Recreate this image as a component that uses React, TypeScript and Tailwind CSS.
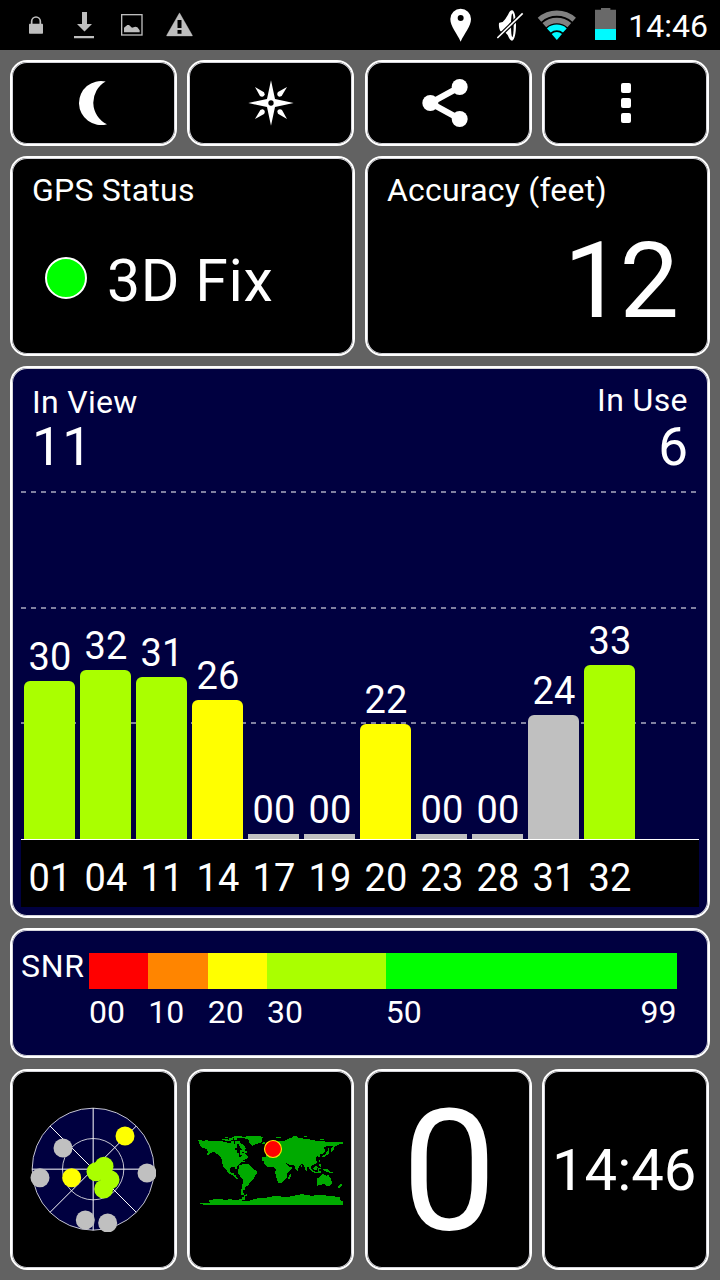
import React from 'react';

type Satellite = {
  id: string;
  snr: string;
  height: number;
  color: string;
};

type RadarDot = {
  x: number;
  y: number;
  fill: string;
};

const GRAY = '#c0c0c0';
const YELLOW = '#ffff00';
const LIME = '#aaff00';

const satellites: Satellite[] = [
  { id: '01', snr: '30', height: 158, color: LIME },
  { id: '04', snr: '32', height: 169, color: LIME },
  { id: '11', snr: '31', height: 162, color: LIME },
  { id: '14', snr: '26', height: 139, color: YELLOW },
  { id: '17', snr: '00', height: 5, color: GRAY },
  { id: '19', snr: '00', height: 5, color: GRAY },
  { id: '20', snr: '22', height: 115, color: YELLOW },
  { id: '23', snr: '00', height: 5, color: GRAY },
  { id: '28', snr: '00', height: 5, color: GRAY },
  { id: '31', snr: '24', height: 124, color: GRAY },
  { id: '32', snr: '33', height: 174, color: LIME },
];

const radarDots: RadarDot[] = [
  { x: 376, y: 229, fill: YELLOW },
  { x: 190, y: 265, fill: GRAY },
  { x: 121, y: 354, fill: GRAY },
  { x: 442, y: 340, fill: GRAY },
  { x: 216, y: 354, fill: YELLOW },
  { x: 257, y: 481, fill: GRAY },
  { x: 324, y: 490, fill: GRAY },
  { x: 313, y: 320, fill: LIME },
  { x: 289, y: 336, fill: LIME },
  { x: 331, y: 360, fill: LIME },
  { x: 312, y: 388, fill: LIME },
];

const continents = [
  // north america
  'M24 60h12v3h9v-3h9v3h45v3h12v3h12v-6h9v9h9v12h-6v6h6v9h9v-9h9v6h-3v9h-6v-6h-3v12l9-3v-9h6l12 9v6l-12 6-12 9-9 9v9h-6v-6h-12l-3 9 3 9h9v6h6v6l9 6h-9l-12-12-9-3-6-9-6-9-6-3-3-18-3-12-12-9-9-6-12 3-6 6-6-3 6-6-3-9-12-3-6-3z',
  'M96 57h18v3h9v3h-18v-3h-9zM117 54h12v6h-12zM105 51h9v3h-9zM132 48h24v6h-15v6h-9zM135 63h15v6l12 6 6 12-9 3-9-6-3-12h-12zM126 51h6v3h-6z',
  'M159 90h6v3h6v6h-9zM138 117h12v3h6v6h-6v-3h-12zM156 123h9v3h-9z',
  // greenland and iceland
  'M153 51h15v-3h45v3h6v3h-3v9l-6 6-12 3-6 3-6 3-6-6-3-9-6-6-12-3h-6zM219 66h6v6h-9v-3h3z',
  // south america
  'M147 135h9v-3h18l9 9 6 6 12 6v6l-6 6-3 12-9 6-6 9-6 6-6 3v9h-6v9l3 3v3h-9v-12l3-9 3-24-9-12-6-9v-12h3z',
  // europe and asia
  'M240 63h9v-3h9v3h27v-3l12-3v-3h12v-3h15v3h15v3h21v3h15v3h30v3h54v6h-12v3l-12 3-3 9-9 9v-9l6-9h-15l-12 3v6h3v6l-9 9h-6v9h-3l-6-3-3 9 3 9-6 6-9 3-3 9-6 3v-6h-6v12h-3l-6-18-9-3-6 6-3 15-6-3-6-15h-9l-12-3-6-6v9l12 6-9 9-9 3-6-15-6-12h6v-6h-15l-6 3-6-6-3 6-6-6-6-3-3 9h-12v-12h12v-6l9-6-6-12z',
  'M226 84h6v-6h5v12h-11zM258 51h15v3h-15zM306 51l6-3h9v3h-12l-6 6v-3zM342 48h9v3h-9zM390 57h12v3h-12z',
  // africa
  'M228 111h24v3h12v3h18l9 18 6 6h9v3l-15 15v12l-9 9-3 6-9 3h-6l-9-33 3-6-9-9h-18l-9-9v-9zM297 165l3-3 3 3-3 12h-6z',
  // japan and islands
  'M411 93h6v6l-6 6-9 6h-6v-3l12-6zM414 84h3v9h-3zM387 120h3v6h-3zM387 132h6v9h-3l-3-6zM357 138l12 15h6v3h-9l-9-12zM369 144l9-6 6 3-3 9h-9zM384 144h9v3h-6v9h-3zM372 156h21v3h-21zM399 147h12l12 9h6v3h-9l-9-3-12-6zM333 135h4v5h-4zM387 153h6v3h-6z',
  // australia and new zealand
  'M381 174l9-3 6-9 9 3 6 3 3-6 3 6 6 9 3 12-9 9h-9l-6-6-15 3-6 3v-12zM414 192h6v3h-6zM450 192h6v5l-9 7h-3v-3z',
  // antarctica
  'M24 249h36v-3h-3v-6h12v-3h30v3h15v-3h12v3h21v-3h9v-6h6v-6h6v-3h3v6h-6v12h-9v3h24v-3l15-3 12-3h24v-3l30-3h12v3h27v-3h15v-3h15v-3h12v3h18v3h12v-3h36v3h27v3h15v9l3 3h12v6h15v6h-435z',
].join('');

const cardEdge = 'rounded-[17px] border-2 border-white shadow-[inset_0_0_0_1px_#d4d4da]';

const Card: React.FC<{ className?: string; children?: React.ReactNode }> = ({ className = '', children }) => (
  <div className={`${cardEdge} ${className}`}>{children}</div>
);

const StatusBar: React.FC = () => (
  <header className="flex h-[50px] shrink-0 items-start bg-black">
    <svg className="ml-[29px] mt-4" width="14" height="18" viewBox="87 48 42 54" fill="#bebebe">
      <path d="M95 74v-10a13 13 0 0 1 26 0v10" fill="none" stroke="#bebebe" strokeWidth="5" />
      <rect x="87" y="71" width="42" height="30" rx="2" />
    </svg>
    <svg className="ml-[31px] mt-3" width="20" height="27" viewBox="222 36 60 81" fill="#bebebe">
      <path d="M246 36h15v36h15l-22.500 22.500L231 72h15zM222 108h60v6.500h-60z" />
    </svg>
    <svg className="ml-[27px] mt-[14px]" width="22" height="22" viewBox="363 42 66 66" fill="#bebebe">
      <rect x="365" y="44" width="61" height="61" fill="none" stroke="#bebebe" strokeWidth="4" />
      <path d="M372 97V83l10-8h5l9 8 10-3 6 2 7 9v6z" />
    </svg>
    <svg className="ml-[23px] mt-[12px]" width="27" height="25" viewBox="499 36 81 75">
      <path d="M539.500 38.500L578 106v2h-77v-2z" fill="#bebebe" stroke="#bebebe" strokeLinejoin="round" />
      <path d="M533.500 60h12v24h-12zM533.500 90h12v11h-12z" fill="#000" />
    </svg>

    <div className="ml-auto flex items-start pr-3">
      <svg className="mt-2" width="22" height="34" viewBox="30 24 66 102">
        <path
          fillRule="evenodd"
          d="M62 26a31 31 0 0 0-31 31c0 22 20 43 31 68 11-25 31-46 31-68a31 31 0 0 0-31-31zm0 19a9 9 0 1 1 0 18 9 9 0 0 1 0-18z"
          fill="#fff"
        />
      </svg>
      <svg className="ml-[25px] mt-[9px]" width="27" height="32" viewBox="171 27 81 96">
        <path d="M178 68l10-2 8-9 8-13c4-9 8-13 12-13 8 0 12 22 12 45s-4 46-12 46c-5 0-9-8-13-17l-9-10h-9c-8-1-10-24-7-27z" fill="#fff" />
        <ellipse cx="217" cy="76" rx="4" ry="36" fill="#000" />
        <path d="M172 114l76-74" stroke="#000" strokeWidth="12" />
        <path d="M172 114l76-74" stroke="#fff" strokeWidth="5" />
      </svg>
      <svg className="ml-[13px] mt-[10px]" width="40" height="31" viewBox="290 30 120 93" fill="none">
        <path d="M297.500 59A79 79 0 0 1 401.500 59" stroke="#818181" strokeWidth="16" />
        <path d="M312 75.500A57 57 0 0 1 387 75.500" stroke="#818181" strokeWidth="17" />
        <path d="M325.500 91.500A36 36 0 0 1 373.500 91.500" stroke="#00faff" strokeWidth="17" />
        <path d="M334 102A24 24 0 0 1 365 102L349.500 120z" fill="#00faff" />
      </svg>
      <svg className="ml-[18px] mt-2" width="21" height="32" viewBox="465 24 63 96">
        <path d="M483 24h28v5h17v58h-63V29h18z" fill="#696969" />
        <path d="M465 87h63v33h-63z" fill="#00faff" />
      </svg>
      <span className="ml-[12.500px] mt-[10px] text-[32px] leading-none">14:46</span>
    </div>
  </header>
);

const Toolbar: React.FC = () => (
  <div className="grid h-[86px] grid-cols-[repeat(4,167px)] gap-x-[10.400px]">
    <Card className="flex items-center justify-center bg-black pr-[1px]">
      <svg width="30" height="46" viewBox="235 240 90 138">
        <path d="M318 244.500A66 66 0 1 0 322 372.500A72 72 0 0 1 318 244.500z" fill="#fff" />
      </svg>
    </Card>
    <Card className="flex items-center justify-center bg-black">
      <svg width="46" height="46" viewBox="-69 -69 138 138" fill="#fff">
        <path d="M0-68L12-12 68 0 12 12 0 68-12 12-68 0-12-12z" />
        <circle r="8" fill="#000" />
        {[0, 90, 180, 270].map(angle => (
          <path key={angle} transform={`rotate(${angle})`} d="M48-48L21-33C17-28 18-20 26-19L32-21z" />
        ))}
      </svg>
    </Card>
    <Card className="flex items-center justify-center bg-black pr-[6px]">
      <svg width="46" height="48" viewBox="728 87 138 144" fill="#fff">
        <path d="M841 111l-88 48 88 48" fill="none" stroke="#fff" strokeWidth="18" />
        <circle cx="753" cy="159" r="24" />
        <circle cx="841" cy="111" r="24" />
        <circle cx="841" cy="207" r="24" />
      </svg>
    </Card>
    <Card className="flex flex-col items-center justify-center gap-[5px] bg-black">
      <span className="size-[10px] rounded-[2px] bg-white" />
      <span className="size-[10px] rounded-[2px] bg-white" />
      <span className="size-[10px] rounded-[2px] bg-white" />
    </Card>
  </div>
);

const StatusCards: React.FC = () => (
  <div className="mt-[10px] grid h-[200px] grid-cols-2 gap-x-[10px]">
    <Card className="bg-black px-5 pt-4">
      <h2 className="text-[32px] leading-none tracking-[0.220px]">GPS Status</h2>
      <div className="mt-[45px] flex items-center pl-[13px]">
        <span className="mb-[5px] size-[42px] rounded-full border-2 border-white bg-[#00ff00]" />
        <span className="ml-5 text-[59px] leading-none tracking-[0.600px]">3D Fix</span>
      </div>
    </Card>
    <Card className="bg-black pl-5 pr-[33px] pt-4">
      <h2 className="text-[32px] leading-none tracking-[0.200px] whitespace-nowrap">Accuracy (feet)</h2>
      <div className="mt-[22px] text-right text-[106px] leading-none tracking-[-4px]">12</div>
    </Card>
  </div>
);

const GridLine: React.FC = () => (
  <div className="h-[2px] w-[675px] bg-[repeating-linear-gradient(90deg,#8080a0_0_5px,transparent_5px_10px)]" />
);

const SignalChart: React.FC = () => (
  <Card className="mt-[10px] flex h-[552px] flex-col bg-[#000040] px-[9px]">
    <div className="flex h-[123px] justify-between px-[11px] pt-[16px]">
      <div>
        <h2 className="mt-[2px] text-[32px] leading-none tracking-[0.300px]">In View</h2>
        <div className="mt-[3px] text-[53px] leading-none tracking-[0.500px]">11</div>
      </div>
      <div className="text-right">
        <h2 className="text-[32px] leading-none tracking-[0.400px]">In Use</h2>
        <div className="mt-[5px] text-[53px] leading-none">6</div>
      </div>
    </div>
    <div className="relative h-[349px] border-b border-white">
      <div className="absolute inset-x-0 top-0 flex flex-col">
        <GridLine />
        <div className="h-[114px]" />
        <GridLine />
        <div className="h-[113px]" />
        <GridLine />
      </div>
      <div className="relative flex h-full items-end gap-[5px] pl-[3px]">
        {satellites.map(sat => (
          <div key={sat.id} className="flex w-[51px] flex-col items-center">
            <span className="mb-[5px] pl-[1px] text-[38px] leading-none tracking-[0.200px]">{sat.snr}</span>
            <div
              className={`w-full ${sat.height > 10 ? 'rounded-t-[6px]' : ''}`}
              style={{ height: sat.height, backgroundColor: sat.color }}
            />
          </div>
        ))}
      </div>
    </div>
    <div className="flex h-[67px] gap-[5px] bg-black pl-[3px] pt-[19px]">
      {satellites.map(sat => (
        <span key={sat.id} className="w-[51px] pl-[1px] text-center text-[38px] leading-none tracking-[0.200px]">
          {sat.id}
        </span>
      ))}
    </div>
  </Card>
);

const SnrLegend: React.FC = () => (
  <Card className="mt-[10px] flex h-[130px] bg-[#000040] pl-[9px] pr-[31.500px] pt-[23px]">
    <span className="-mt-[3px] w-[68px] text-[32px] leading-none tracking-[0.700px]">SNR</span>
    <div className="flex-1">
      <div className="grid h-9 grid-cols-[10fr_10fr_10fr_20fr_49fr]">
        <div className="bg-[#ff0000]" />
        <div className="bg-[#ff8500]" />
        <div className="bg-[#ffff00]" />
        <div className="bg-[#aaff00]" />
        <div className="bg-[#00ff00]" />
      </div>
      <div className="mt-[7px] grid grid-cols-[10fr_10fr_10fr_20fr_49fr] text-[32px] leading-none">
        <span>00</span>
        <span>10</span>
        <span>20</span>
        <span>30</span>
        <div className="flex justify-between">
          <span>50</span>
          <span>99</span>
        </div>
      </div>
    </div>
  </Card>
);

const Radar: React.FC = () => (
  <svg width="126" height="126" viewBox="91 139 378 378">
    <circle cx="280.500" cy="328.500" r="183" fill="#000040" stroke="#c4c4d0" strokeWidth="3" />
    <circle cx="280.500" cy="328.500" r="92" fill="none" stroke="#c4c4d0" strokeWidth="3" />
    <path d="M280.500 145v367M97 328.500h367M151 199l259 259M410 199L151 458" stroke="#fff" strokeWidth="3" />
    {radarDots.map(dot => (
      <circle key={`${dot.x}-${dot.y}`} cx={dot.x} cy={dot.y} r="28.500" fill={dot.fill} />
    ))}
  </svg>
);

const WorldMap: React.FC = () => (
  <svg width="145" height="70" viewBox="24 45 435 210">
    <path d={continents} fill="#00aa00" shapeRendering="crispEdges" />
    <circle cx="249" cy="87" r="25.500" fill="#ff0000" stroke="#ffe600" strokeWidth="3.500" />
  </svg>
);

const BottomCards: React.FC = () => (
  <div className="mt-[11px] grid h-[201px] grid-cols-[repeat(4,167px)] gap-x-[10.400px]">
    <Card className="flex items-center justify-center bg-black pb-[1px] pr-[1px]">
      <Radar />
    </Card>
    <Card className="flex items-center justify-center bg-black">
      <WorldMap />
    </Card>
    <Card className="flex items-center justify-center bg-black pl-[2px] pt-[3px]">
      <span className="text-[169px] leading-none">0</span>
    </Card>
    <Card className="flex items-center justify-center bg-black pr-[3px]">
      <span className="text-[58px] leading-none">14:46</span>
    </Card>
  </div>
);

export default function App() {
  return (
    <div className="flex h-[1280px] w-[720px] flex-col overflow-hidden bg-[#626262] font-['Roboto',sans-serif] text-white">
      <StatusBar />
      <main className="flex flex-col p-[10px]">
        <Toolbar />
        <StatusCards />
        <SignalChart />
        <SnrLegend />
        <BottomCards />
      </main>
    </div>
  );
}
